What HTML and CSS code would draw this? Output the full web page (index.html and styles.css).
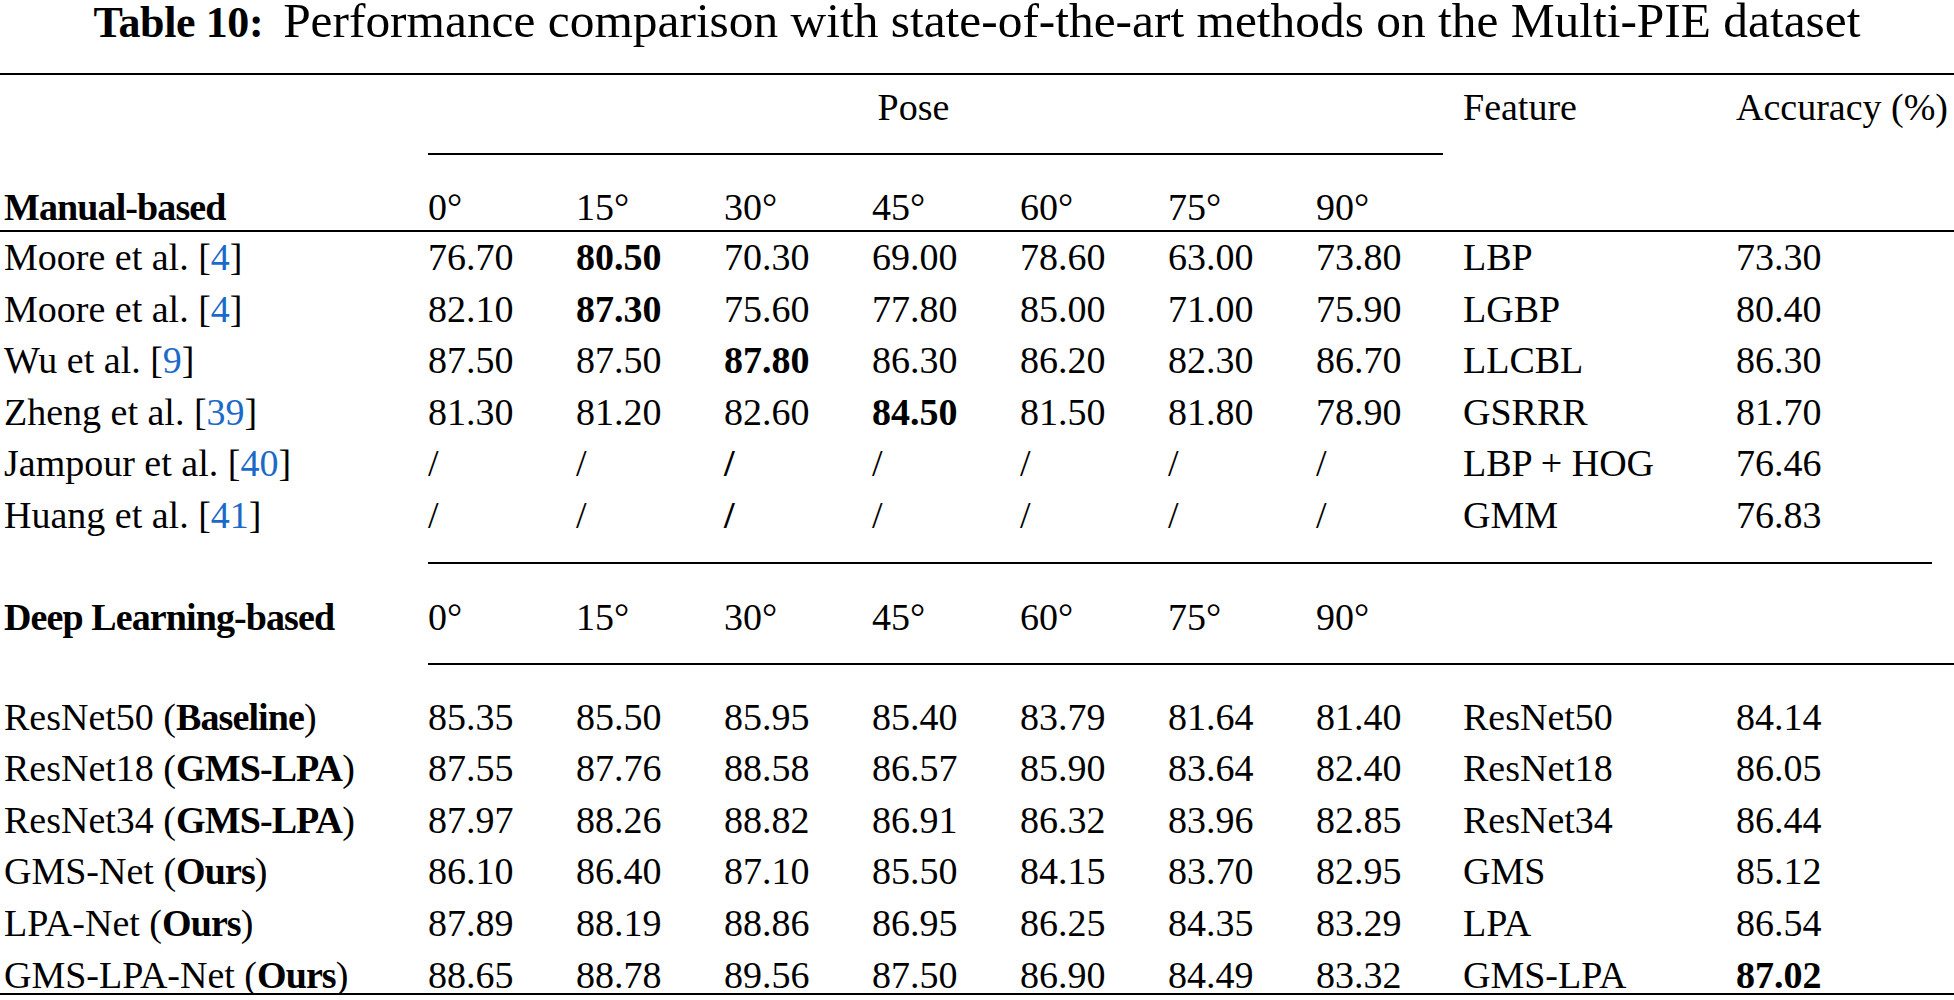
FILE: index.html
```html
<!DOCTYPE html>
<html>
<head>
<meta charset="utf-8">
<title>Table 10</title>
<link rel="stylesheet" href="styles.css">
</head>
<body>
<div class="page">
  <div class="caption"><b class="cap-label">Table 10:</b>Performance comparison with state-of-the-art methods on the Multi-PIE dataset</div>
  <div class="rule rule-top"></div>

  <div class="row head1">
    <div class="c1"></div>
    <div class="pose">Pose</div>
    <div class="feat">Feature</div>
    <div class="acc">Accuracy (%)</div>
  </div>
  <div class="row partial cmid1"><div class="line span-pose"></div></div>

  <div class="row head2">
    <div class="c1"><b>Manual-based</b></div>
    <div>0°</div><div>15°</div><div>30°</div><div>45°</div><div>60°</div><div>75°</div><div>90°</div>
    <div></div><div></div>
  </div>
  <div class="rule rule-mid"></div>

  <div class="row data">
    <div class="c1">Moore et al. [<span class="cite">4</span>]</div>
    <div>76.70</div><div><b>80.50</b></div><div>70.30</div><div>69.00</div><div>78.60</div><div>63.00</div><div>73.80</div><div>LBP</div><div>73.30</div>
  </div>
  <div class="row data">
    <div class="c1">Moore et al. [<span class="cite">4</span>]</div>
    <div>82.10</div><div><b>87.30</b></div><div>75.60</div><div>77.80</div><div>85.00</div><div>71.00</div><div>75.90</div><div>LGBP</div><div>80.40</div>
  </div>
  <div class="row data">
    <div class="c1">Wu et al. [<span class="cite">9</span>]</div>
    <div>87.50</div><div>87.50</div><div><b>87.80</b></div><div>86.30</div><div>86.20</div><div>82.30</div><div>86.70</div><div>LLCBL</div><div>86.30</div>
  </div>
  <div class="row data">
    <div class="c1">Zheng et al. [<span class="cite">39</span>]</div>
    <div>81.30</div><div>81.20</div><div>82.60</div><div><b>84.50</b></div><div>81.50</div><div>81.80</div><div>78.90</div><div>GSRRR</div><div>81.70</div>
  </div>
  <div class="row data">
    <div class="c1">Jampour et al. [<span class="cite">40</span>]</div>
    <div>/</div><div>/</div><div><b>/</b></div><div>/</div><div>/</div><div>/</div><div>/</div><div>LBP + HOG</div><div>76.46</div>
  </div>
  <div class="row data">
    <div class="c1">Huang et al. [<span class="cite">41</span>]</div>
    <div>/</div><div>/</div><div><b>/</b></div><div>/</div><div>/</div><div>/</div><div>/</div><div>GMM</div><div>76.83</div>
  </div>
  <div class="row partial cmid2"><div class="line span-rest trim"></div></div>

  <div class="row head3">
    <div class="c1"><b>Deep Learning-based</b></div>
    <div>0°</div><div>15°</div><div>30°</div><div>45°</div><div>60°</div><div>75°</div><div>90°</div>
    <div></div><div></div>
  </div>
  <div class="row partial cmid3"><div class="line span-rest"></div></div>

  <div class="row data first-deep">
    <div class="c1">ResNet50 (<b>Baseline</b>)</div>
    <div>85.35</div><div>85.50</div><div>85.95</div><div>85.40</div><div>83.79</div><div>81.64</div><div>81.40</div><div>ResNet50</div><div>84.14</div>
  </div>
  <div class="row data">
    <div class="c1">ResNet18 (<b>GMS-LPA</b>)</div>
    <div>87.55</div><div>87.76</div><div>88.58</div><div>86.57</div><div>85.90</div><div>83.64</div><div>82.40</div><div>ResNet18</div><div>86.05</div>
  </div>
  <div class="row data">
    <div class="c1">ResNet34 (<b>GMS-LPA</b>)</div>
    <div>87.97</div><div>88.26</div><div>88.82</div><div>86.91</div><div>86.32</div><div>83.96</div><div>82.85</div><div>ResNet34</div><div>86.44</div>
  </div>
  <div class="row data">
    <div class="c1">GMS-Net (<b>Ours</b>)</div>
    <div>86.10</div><div>86.40</div><div>87.10</div><div>85.50</div><div>84.15</div><div>83.70</div><div>82.95</div><div>GMS</div><div>85.12</div>
  </div>
  <div class="row data">
    <div class="c1">LPA-Net (<b>Ours</b>)</div>
    <div>87.89</div><div>88.19</div><div>88.86</div><div>86.95</div><div>86.25</div><div>84.35</div><div>83.29</div><div>LPA</div><div>86.54</div>
  </div>
  <div class="row data">
    <div class="c1">GMS-LPA-Net (<b>Ours</b>)</div>
    <div>88.65</div><div>88.78</div><div>89.56</div><div>87.50</div><div>86.90</div><div>84.49</div><div>83.32</div><div>GMS-LPA</div><div><b>87.02</b></div>
  </div>
  <div class="rule rule-bottom"></div>
</div>
</body>
</html>
```

FILE: styles.css
```css
html, body {
  margin: 0;
  padding: 0;
  background: #ffffff;
  overflow: hidden;
}

.page {
  width: 1954px;
  font-family: "Liberation Serif", "Times New Roman", serif;
  font-size: 38px;
  color: #000000;
}

b {
  font-weight: bold;
}

.caption {
  font-size: 49.4px;
  line-height: 42px;
  height: 42px;
  text-align: center;
  white-space: nowrap;
}

.cap-label {
  font-size: 44px;
  letter-spacing: -0.4px;
  margin-right: 20px;
}

.rule {
  height: 2px;
  background: #000000;
}

.rule-top {
  margin-top: 31px;
}

.rule-mid {
  margin-top: 1px;
}

.rule-bottom {
  margin-top: -8px;
  position: relative;
}

.row {
  display: grid;
  grid-template-columns: 428px 148px 148px 148px 148px 148px 148px 147px 273px 1fr;
  white-space: nowrap;
}

.c1 {
  padding-left: 4px;
}

.c1 b {
  letter-spacing: -0.9px;
}

.head1 {
  line-height: 65px;
  height: 65px;
}

.pose {
  grid-column: 2 / 9;
  text-align: center;
  padding-right: 64px;
}

.head2 {
  margin-top: 30px;
  line-height: 44px;
  height: 44px;
}

.data {
  line-height: 51.6px;
  height: 51.6px;
}

.head3 {
  margin-top: 28px;
  line-height: 51.6px;
  height: 51.6px;
}

.first-deep {
  margin-top: 26.6px;
}

.partial {
  height: 2px;
}

.cmid1 {
  margin-top: 13px;
}

.cmid2 {
  margin-top: 20px;
}

.cmid3 {
  margin-top: 19.8px;
}

.line {
  height: 2px;
  background: #000000;
}

.span-pose {
  grid-column: 2 / 9;
  margin-right: 20px;
}

.span-rest {
  grid-column: 2 / -1;
}

.span-rest.trim {
  margin-right: 22px;
}

.cite {
  color: #1b6ac9;
}
```
